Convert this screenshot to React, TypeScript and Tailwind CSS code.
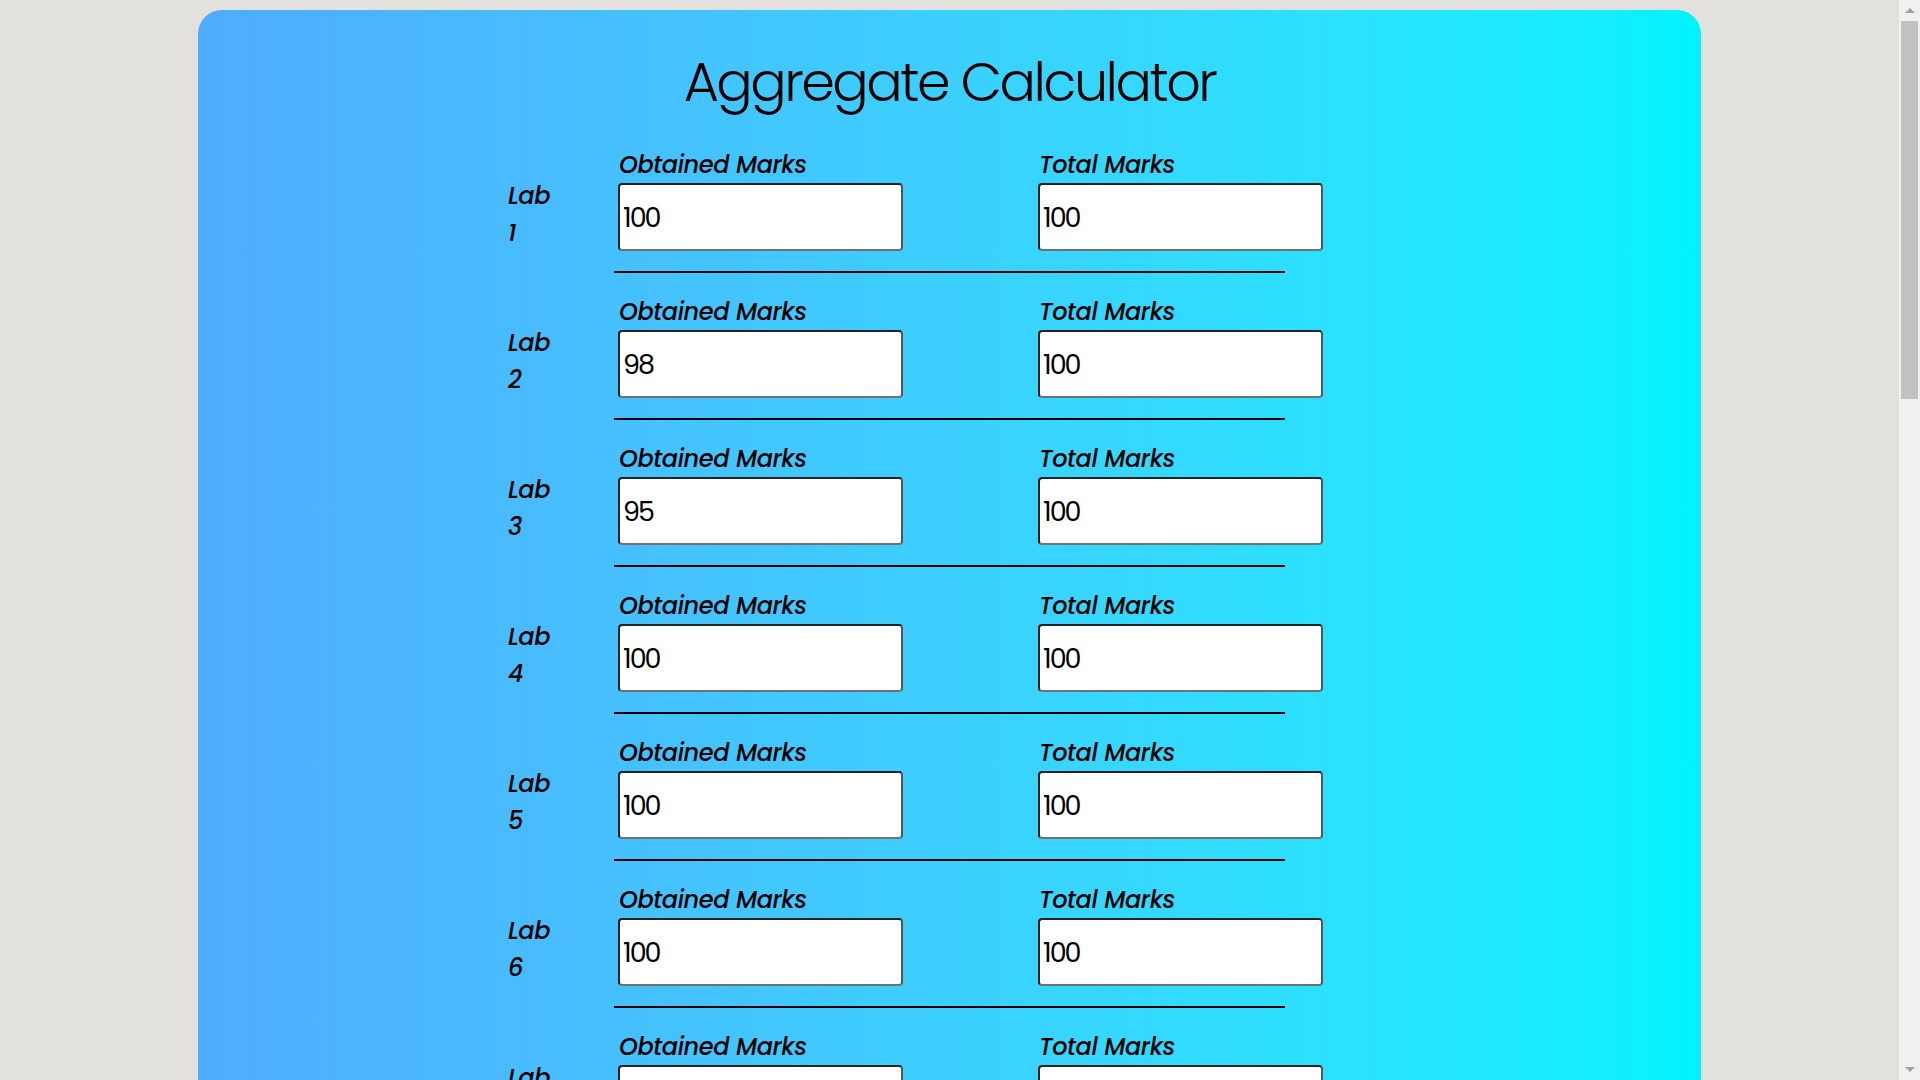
import { useState } from "react"

const initial = [
  { obtained: "100", total: "100" },
  { obtained: "98", total: "100" },
  { obtained: "95", total: "100" },
  { obtained: "100", total: "100" },
  { obtained: "100", total: "100" },
  { obtained: "100", total: "100" },
  { obtained: "100", total: "100" },
  { obtained: "100", total: "100" },
  { obtained: "100", total: "100" },
  { obtained: "100", total: "100" },
  { obtained: "100", total: "100" },
  { obtained: "100", total: "100" },
  { obtained: "100", total: "100" },
  { obtained: "100", total: "100" },
  { obtained: "100", total: "100" },
  { obtained: "100", total: "100" },
]

// fake browser scrollbar, the page in the screenshot is scrolled to the top
function Scrollbar() {
  return (
    <div className="fixed top-0 right-0 w-[21px] h-screen bg-[#f1f1f1] flex flex-col items-center">
      <div className="h-[21px] flex items-center justify-center">
        <div className="w-0 h-0 border-l-[5px] border-r-[5px] border-b-[5px] border-l-transparent border-r-transparent border-b-[#a3a3a3]" />
      </div>
      <div className="w-[17px] h-[378px] bg-[#c1c1c1]" />
      <div className="flex-1" />
      <div className="h-[21px] flex items-center justify-center">
        <div className="w-0 h-0 border-l-[5px] border-r-[5px] border-t-[5px] border-l-transparent border-r-transparent border-t-[#a3a3a3]" />
      </div>
    </div>
  )
}

export default function App() {
  const [labs, setLabs] = useState(initial)

  const update = (i: number, key: "obtained" | "total", value: string) => {
    setLabs((prev) => prev.map((l, idx) => (idx === i ? { ...l, [key]: value } : l)))
  }

  return (
    <div className="min-h-screen bg-[#e2e1dd] pt-[10px] pb-[10px] font-['Poppins','Inter',sans-serif] text-black">
      <div className="w-[1503px] ml-[198px] rounded-[24px] bg-gradient-to-r from-[#4facfe] to-[#00f2fe] pt-[42px] pb-[60px]">
        <h1 className="text-center text-[54px] leading-[60px] font-light tracking-[-2.5px]">Aggregate Calculator</h1>

        <div className="mt-[35px]">
          {labs.map((lab, i) => (
            <div key={i}>
              <div className="flex ml-[310px]">
                <div className="w-[110px] pt-[30px] text-[24px] leading-[37px] italic font-medium tracking-[-0.3px]">
                  Lab
                  <br />
                  {i + 1}
                </div>
                <div className="w-[420px]">
                  <div className="text-[24px] leading-[36px] italic font-medium tracking-[-0.4px] pl-[1px]">Obtained Marks</div>
                  <input
                    value={lab.obtained}
                    onChange={(e) => update(i, "obtained", e.target.value)}
                    className="w-[285px] h-[68px] bg-white rounded-[4px] border-2 border-[#222] border-b-[#707070] border-r-[#555] px-[3px] pt-[2px] text-[27px] tracking-[-2px] outline-none"
                  />
                </div>
                <div className="w-[285px]">
                  <div className="text-[24px] leading-[36px] italic font-medium tracking-[-0.4px] pl-[1px]">Total Marks</div>
                  <input
                    value={lab.total}
                    onChange={(e) => update(i, "total", e.target.value)}
                    className="w-[285px] h-[68px] bg-white rounded-[4px] border-2 border-[#222] border-b-[#707070] border-r-[#555] px-[3px] pt-[2px] text-[27px] tracking-[-2px] outline-none"
                  />
                </div>
              </div>
              <hr className="w-[671px] mx-auto mt-[20px] mb-[21px] border-0 h-[2px] bg-black" />
            </div>
          ))}
        </div>

        <div className="flex justify-center mt-[10px]">
          <button className="px-8 py-3 bg-white rounded-[8px] text-[24px] border-2 border-black">Calculate</button>
        </div>
      </div>
      <Scrollbar />
    </div>
  )
}
